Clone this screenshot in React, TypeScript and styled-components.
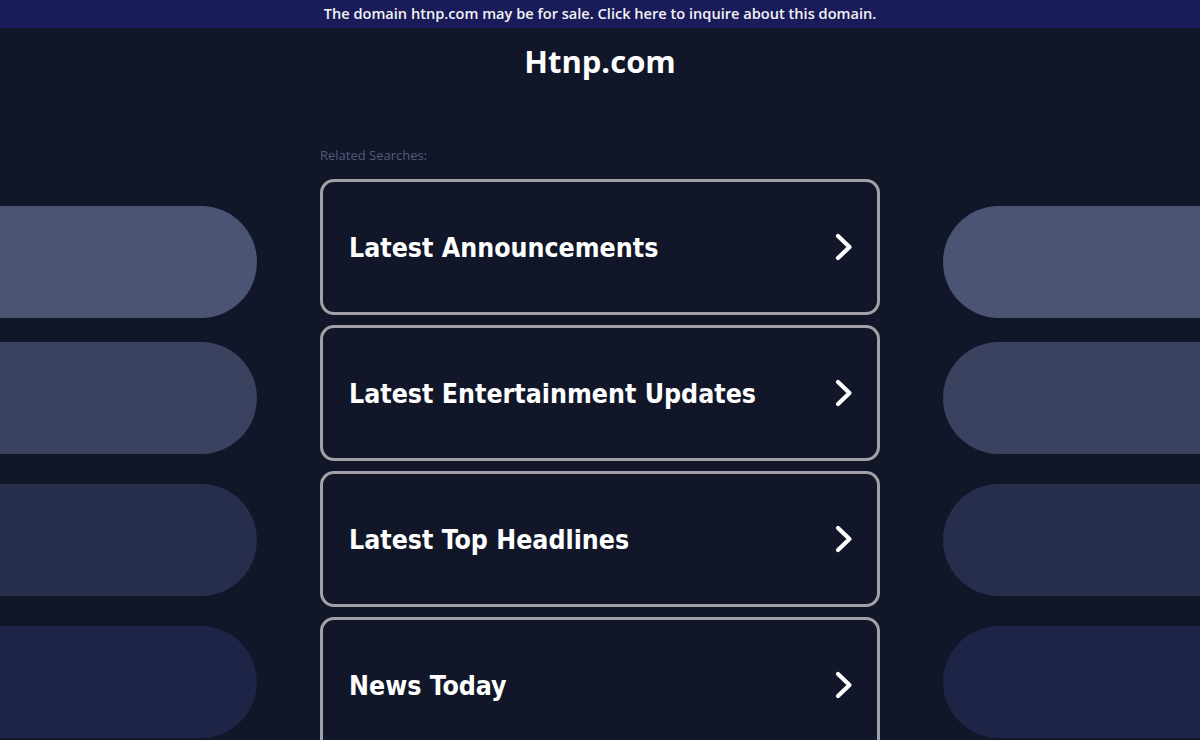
import React from "react";
import styled, { createGlobalStyle } from "styled-components";

const GlobalStyle = createGlobalStyle`
  html, body { margin: 0; padding: 0; background: #111729; }
  body { font-family: "Open Sans", "Noto Sans", sans-serif; overflow: hidden; }
  * { box-sizing: border-box; }
`;

const Page = styled.div`
  width: 1200px;
  height: 740px;
  background: #111729;
  overflow: hidden;
`;

const TopBar = styled.a`
  display: block;
  height: 28px;
  line-height: 27px;
  background: #1a1c59;
  color: #f2f2f6;
  text-align: center;
  font-family: "Open Sans", sans-serif;
  font-weight: 600;
  font-size: 14.6px;
  text-decoration: none;
`;

const Layout = styled.div`
  display: grid;
  grid-template-columns: 1fr 560px 1fr;
  column-gap: 63px;
`;

const Side = styled.div<{ $side: "left" | "right" }>`
  display: flex;
  flex-direction: column;
  padding-top: 178px;
  margin-left: ${(p) => (p.$side === "left" ? "-60px" : "0")};
  margin-right: ${(p) => (p.$side === "right" ? "-60px" : "0")};
`;

const Pill = styled.div<{ $color: string; $gap: number }>`
  height: 112px;
  margin-top: ${(p) => p.$gap}px;
  background: ${(p) => p.$color};
  border-radius: 56px;
`;

const Center = styled.div`
  display: flex;
  flex-direction: column;
`;

const Title = styled.h1`
  margin: 13px 0 0;
  height: 40px;
  line-height: 40px;
  text-align: center;
  color: #ffffff;
  font-family: "Open Sans", sans-serif;
  font-weight: 700;
  font-size: 31px;
`;

const Related = styled.div`
  margin-top: 67px;
  height: 14px;
  line-height: 14px;
  font-family: "Open Sans", sans-serif;
  font-size: 13px;
  color: #515b7c;
`;

const List = styled.div`
  margin-top: 17px;
  display: flex;
  flex-direction: column;
  gap: 10px;
`;

const Item = styled.a`
  display: flex;
  align-items: center;
  justify-content: space-between;
  height: 136px;
  flex-shrink: 0;
  padding: 0 21px 0 26px;
  border: 3px solid #a1a1a7;
  border-radius: 14px;
  background: #111729;
  color: #ffffff;
  text-decoration: none;
`;

const ItemText = styled.span`
  font-family: "DejaVu Sans Condensed", "DejaVu Sans", sans-serif;
  font-weight: 700;
  font-size: 26.5px;
`;

const Chevron = () => (
  <svg width="22" height="30" viewBox="0 0 22 30" fill="none">
    <path d="M4 4 L15.5 15 L4 26" stroke="#ffffff" strokeWidth="4.2" strokeLinecap="round" strokeLinejoin="round" />
  </svg>
);

const pills = [
  { color: "#4b5573", gap: 0 },
  { color: "#3a4260", gap: 24 },
  { color: "#262e4c", gap: 30 },
  { color: "#1d2445", gap: 30 },
];

const items = [
  "Latest Announcements",
  "Latest Entertainment Updates",
  "Latest Top Headlines",
  "News Today",
];

export default function App() {
  return (
    <Page>
      <GlobalStyle />
      <TopBar href="#">The domain htnp.com may be for sale. Click here to inquire about this domain.</TopBar>
      <Layout>
        <Side $side="left">
          {pills.map((p, i) => (
            <Pill key={i} $color={p.color} $gap={p.gap} />
          ))}
        </Side>
        <Center>
          <Title>Htnp.com</Title>
          <Related>Related Searches:</Related>
          <List>
            {items.map((t) => (
              <Item key={t} href="#">
                <ItemText>{t}</ItemText>
                <Chevron />
              </Item>
            ))}
          </List>
        </Center>
        <Side $side="right">
          {pills.map((p, i) => (
            <Pill key={i} $color={p.color} $gap={p.gap} />
          ))}
        </Side>
      </Layout>
    </Page>
  );
}
